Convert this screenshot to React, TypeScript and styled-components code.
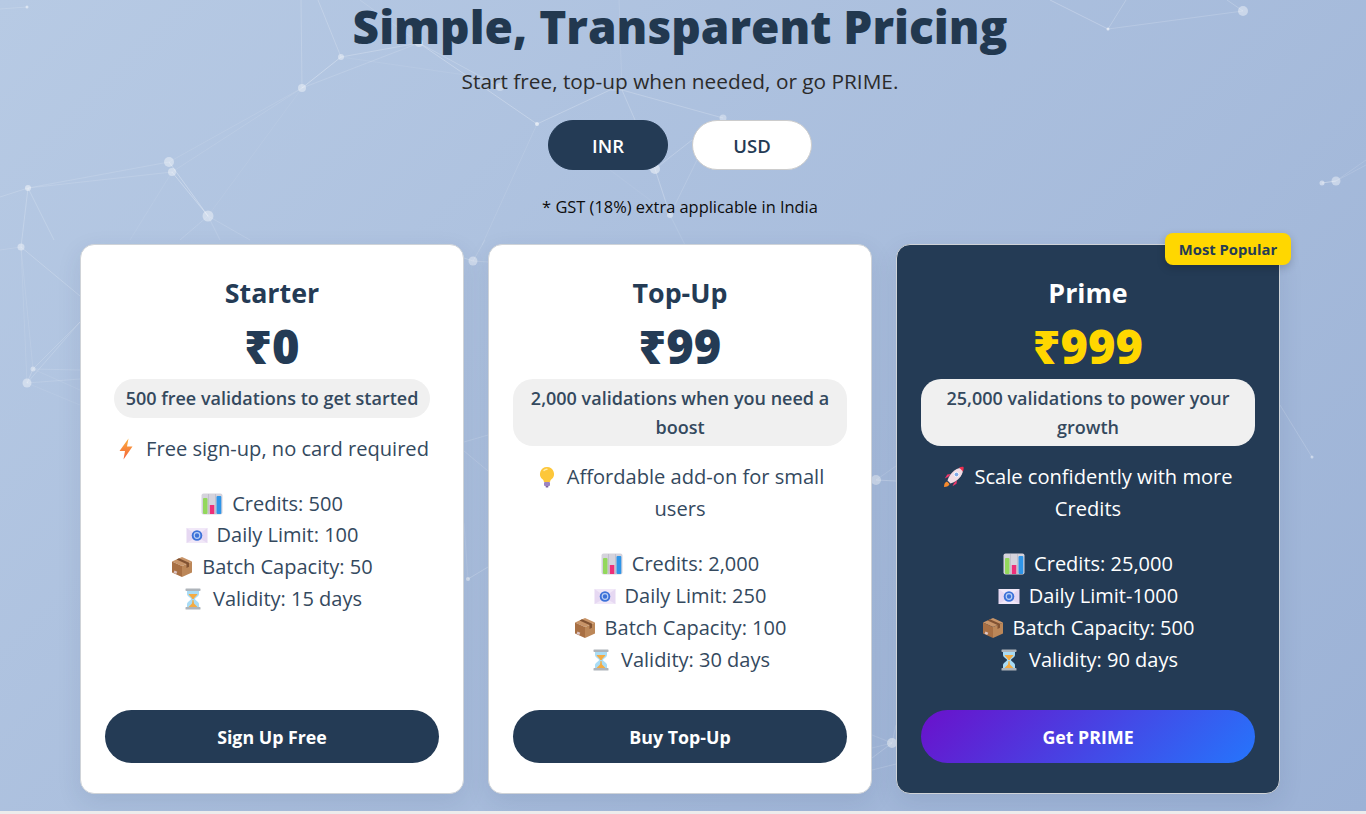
import React from "react";
import styled, { createGlobalStyle } from "styled-components";

const Global = createGlobalStyle`
  html, body { margin: 0; padding: 0; background: #ececec; }
  body { font-family: "Open Sans", "Noto Sans", sans-serif; overflow: hidden; }
  * { box-sizing: border-box; }
`;

const Page = styled.div`
  position: relative;
  height: 811px;
  overflow: hidden;
  background: linear-gradient(135deg, #b7cae4 0%, #9cb2d6 100%);
`;
const Network = styled.svg`
  position: absolute;
  inset: 0;
  width: 1366px;
  height: 811px;
`;
const Content = styled.main`
  position: relative;
  display: flex;
  flex-direction: column;
  align-items: center;
  padding-right: 6px;
`;
const Title = styled.h1`
  margin: 0;
  height: 54px;
  font-size: 46px;
  line-height: 52px;
  font-weight: 800;
  color: #22384f;
  white-space: nowrap;
`;
const Subtitle = styled.p`
  margin: 11px 0 0;
  font-size: 20.8px;
  line-height: 32px;
  color: #2b2b2b;
`;
const Toggle = styled.div`
  display: flex;
  gap: 24px;
  margin-top: 23px;
`;
const ToggleBtn = styled.button<{ $active?: boolean }>`
  width: 120px;
  height: 50px;
  border-radius: 25px;
  border: 1px solid ${(p) => (p.$active ? "#243b55" : "#cccccc")};
  background: ${(p) => (p.$active ? "#243b55" : "#ffffff")};
  color: ${(p) => (p.$active ? "#ffffff" : "#243b55")};
  font-family: inherit;
  font-size: 18.5px;
  font-weight: 600;
`;
const Note = styled.p`
  margin: 25px 0 0;
  font-size: 16.4px;
  line-height: 24px;
  color: #0c0c0c;
`;
const Plans = styled.section`
  display: grid;
  grid-template-columns: repeat(3, 384px);
  gap: 24px;
  margin-top: 25px;
`;
const Card = styled.article<{ $dark?: boolean }>`
  position: relative;
  display: flex;
  flex-direction: column;
  align-items: center;
  height: 550px;
  padding: 30px 24px;
  border: 1px solid #cfd3d8;
  border-radius: 14px;
  text-align: center;
  background: ${(p) => (p.$dark ? "#243b55" : "#ffffff")};
  color: ${(p) => (p.$dark ? "#ffffff" : "#34495e")};
  box-shadow: 0 8px 24px rgba(30, 50, 90, 0.1);
`;
const Badge = styled.span`
  position: absolute;
  top: -12px;
  right: -12px;
  width: 126px;
  height: 32px;
  border-radius: 8px;
  background: #ffd700;
  color: #243b55;
  font-size: 14.8px;
  font-weight: 700;
  line-height: 32px;
  box-shadow: 0 3px 8px rgba(0, 0, 0, 0.18);
`;
const PlanName = styled.h2<{ $dark?: boolean }>`
  margin: 0;
  font-size: 26.8px;
  line-height: 36px;
  font-weight: 700;
  color: ${(p) => (p.$dark ? "#ffffff" : "#243b55")};
`;
const Price = styled.div<{ $dark?: boolean }>`
  margin-top: 6px;
  height: 62px;
  font-family: "Noto Sans", "Open Sans", sans-serif;
  font-size: 47px;
  line-height: 58px;
  font-weight: 900;
  color: ${(p) => (p.$dark ? "#ffd700" : "#243b55")};
`;
const Pill = styled.div`
  padding: 5px 12px;
  border-radius: 20px;
  background: #f0f0f0;
  color: #34495e;
  font-size: 18px;
  line-height: 28.6px;
  font-weight: 600;
`;
const Tagline = styled.p`
  margin: 15px 0 0;
  font-size: 20.1px;
  line-height: 32px;
`;
const Features = styled.ul`
  list-style: none;
  margin: 23px 0 0;
  padding: 0;
  font-size: 20px;
  line-height: 31.8px;
`;
const CTA = styled.button<{ $prime?: boolean }>`
  width: 100%;
  height: 53px;
  margin-top: auto;
  flex: none;
  border: none;
  border-radius: 27px;
  background: ${(p) => (p.$prime ? "linear-gradient(135deg, #6a11cb, #2575fc)" : "#243b55")};
  color: #ffffff;
  font-family: inherit;
  font-size: 17.8px;
  font-weight: 700;
`;
const EmojiSvg = styled.svg`
  display: inline-block;
  width: 22px;
  height: 22px;
  margin-right: 9px;
  vertical-align: -4px;
`;

const Bolt = () => (
  <EmojiSvg viewBox="0 0 22 22">
    <defs>
      <linearGradient id="boltG" x1="0" y1="0" x2="0" y2="1">
        <stop offset="0" stopColor="#fbb03b" />
        <stop offset="1" stopColor="#f4603c" />
      </linearGradient>
    </defs>
    <path d="M13.500 .5 4.500 13h5.500L8.500 21.500 17.500 8.500h-5.500z" fill="url(#boltG)" />
  </EmojiSvg>
);
const Bulb = () => (
  <EmojiSvg viewBox="0 0 22 22">
    <path d="M11 1a7 7 0 0 0-4.200 12.600c.8.7 1 1.500 1.100 2.400h6.200c.1-.9.300-1.700 1.100-2.400A7 7 0 0 0 11 1z" fill="#fdc73a" />
    <path d="M8 4.500a4 4 0 0 1 3-1.300" stroke="#ffeaa8" strokeWidth="1.400" fill="none" strokeLinecap="round" />
    <rect x="8" y="16" width="6" height="4" rx="1" fill="#9c84c0" />
    <rect x="9.500" y="20" width="3" height="1.500" rx=".7" fill="#7c64a0" />
  </EmojiSvg>
);
const Rocket = () => (
  <EmojiSvg viewBox="0 0 22 22">
    <path d="M1 21c0-3 1-5 3-5.500l2.500 2.500C6 20 4 21 1 21z" fill="#f68a2d" />
    <path d="M5 11 1.800 12.500l2.500-4L8 8zM11 17l-1.500 3.200 4-2.500L14 14z" fill="#f0366a" />
    <path d="M4.500 14.500C7 7 12 2.500 18 2l2 2c-.5 6-5 11-12.500 13.500z" fill="#f2dbe3" />
    <path d="M16 1.500c2-.7 3.600-.8 4.500-.5.300.9.200 2.500-.5 4.500z" fill="#ee2f50" />
    <circle cx="13.500" cy="8.500" r="2.300" fill="#7da7e8" stroke="#fff" strokeWidth=".8" />
  </EmojiSvg>
);
const Chart = () => (
  <EmojiSvg viewBox="0 0 22 22">
    <rect x="0.500" y="0.500" width="21" height="21" rx="2" fill="#d5d3dc" />
    <path d="M7.500 1v20M14.500 1v20" stroke="#c2c0cc" strokeWidth="1" />
    <rect x="2" y="5" width="4.500" height="16" rx="1" fill="#93d85c" />
    <rect x="8.800" y="12" width="4.500" height="9" fill="#ee2f79" />
    <rect x="15.500" y="3" width="4.800" height="18" rx="1" fill="#2f95e8" />
  </EmojiSvg>
);
const Mail = () => (
  <EmojiSvg viewBox="0 0 22 22">
    <rect x="0.500" y="4" width="21" height="15" fill="#e6d8f2" />
    <path d="M.5 4 11 11.500 21.500 4zM.5 19 11 13l10.500 6z" fill="#f1e8f8" />
    <circle cx="11" cy="11.500" r="5.300" fill="#3d72d8" />
    <circle cx="11" cy="11.500" r="2.800" fill="none" stroke="#bcd2f5" strokeWidth="1.200" />
  </EmojiSvg>
);
const Box = () => (
  <EmojiSvg viewBox="0 0 22 22">
    <path d="M1 5.500 11 1l10 4.500L11 10z" fill="#c89468" />
    <path d="M1 5.500V16.500L11 21V10z" fill="#a86f43" />
    <path d="M21 5.500V16.500L11 21V10z" fill="#bc8758" />
    <path d="M5.500 3.500 15.500 8v4l2.500-1.200V6.800L8 2.300z" fill="#815232" />
    <rect x="3" y="15" width="3" height="2.500" fill="#ddc6c6" transform="rotate(24 4.500 16)" />
  </EmojiSvg>
);
const Glass = () => (
  <EmojiSvg viewBox="0 0 22 22">
    <path d="M5 2.500h12v3.500c0 2.500-4 3.500-4 5s4 2.500 4 5v3.500H5V16c0-2.500 4-3.500 4-5S5 8.500 5 6z" fill="#a9dcf5" />
    <path d="M6.500 6h9c-.5 2-3.500 3-3.800 5h-1.400C10 9 7 8 6.500 6z" fill="#f4ab42" />
    <path d="M10.500 12h1l.5 3.500 3.500 3.500h-9l3.500-3.500z" fill="#f4ab42" />
    <rect x="3.500" y="0.500" width="15" height="2.400" rx=".6" fill="#aeb4ba" />
    <rect x="3.500" y="19.100" width="15" height="2.400" rx=".6" fill="#aeb4ba" />
  </EmojiSvg>
);

const nodes: [number, number, number, number][] = [
  [27, 7, 1.5, 0.5], [302, 88, 4, 0.4], [341, 57, 3, 0.4], [419, 43, 4, 0.35], [169, 162, 5, 0.4],
  [172, 172, 4, 0.4], [208, 216, 5.5, 0.4], [28, 188, 3, 0.45], [21, 247, 3.5, 0.4], [33, 369, 2.5, 0.4],
  [27, 383, 4.5, 0.4], [500, 87, 4, 0.3], [537, 124, 2, 0.6], [723, 118, 3.5, 0.35], [655, 169, 5, 0.45],
  [670, 215, 3, 0.4], [1108, 29, 1.5, 0.6], [1243, 11, 5, 0.4], [1322, 183, 2.5, 0.45], [1336, 181, 4.5, 0.4],
  [1312, 457, 1.5, 0.45], [473, 261, 4.5, 0.4], [468, 579, 2, 0.45], [876, 480, 5, 0.4], [892, 743, 5, 0.45],
];
const edges: [number, number, number, number, number][] = [
  [0, 9, 27, 7, 0.15], [301, 0, 302, 88, 0.18], [318, 0, 341, 57, 0.2], [302, 88, 341, 57, 0.3], [302, 88, 419, 43, 0.14],
  [341, 57, 419, 43, 0.22], [341, 57, 500, 80, 0.07], [169, 162, 302, 88, 0.1], [172, 172, 302, 88, 0.1], [208, 216, 302, 88, 0.07],
  [208, 216, 169, 162, 0.28], [208, 216, 172, 172, 0.28], [28, 188, 169, 162, 0.13], [28, 188, 172, 172, 0.13], [0, 197, 28, 188, 0.16],
  [28, 188, 21, 247, 0.2], [28, 188, 54, 240, 0.18], [208, 216, 180, 240, 0.12], [208, 216, 250, 240, 0.12], [208, 216, 220, 240, 0.12],
  [172, 172, 130, 240, 0.07], [419, 43, 537, 124, 0.26], [419, 43, 500, 87, 0.18], [360, 0, 419, 43, 0.12], [537, 124, 610, 90, 0.22],
  [622, 90, 723, 118, 0.2], [622, 90, 635, 120, 0.2], [619, 0, 622, 90, 0.1], [610, 90, 622, 90, 0.2], [655, 169, 670, 215, 0.24], [697, 160, 670, 215, 0.13],
  [692, 140, 655, 169, 0.2], [537, 124, 482, 245, 0.1], [670, 215, 685, 245, 0.1], [610, 170, 670, 215, 0.06],
  [1050, 0, 1108, 29, 0.24], [1126, 0, 1108, 29, 0.2], [1108, 29, 1243, 11, 0.16], [1227, 0, 1243, 11, 0.2], [1322, 183, 1336, 181, 0.35],
  [1336, 181, 1366, 160, 0.13], [1336, 181, 1366, 165, 0.13], [1280, 405, 1312, 457, 0.16],
  [21, 247, 80, 296, 0.2], [0, 250, 21, 247, 0.12], [21, 247, 33, 369, 0.1], [21, 247, 27, 383, 0.1],
  [33, 369, 80, 322, 0.16], [33, 369, 80, 370, 0.12], [33, 369, 80, 390, 0.08], [27, 383, 80, 322, 0.16], [27, 383, 80, 379, 0.12],
  [27, 383, 80, 405, 0.07], [33, 369, 27, 383, 0.2], [464, 442, 488, 435, 0.14], [464, 451, 488, 471, 0.14], [468, 579, 488, 567, 0.2],
  [468, 579, 464, 523, 0.1], [464, 258, 473, 261, 0.2], [473, 261, 488, 262, 0.14], [473, 261, 485, 240, 0.14], [876, 480, 896, 481, 0.24], [876, 480, 896, 466, 0.13],
  [892, 743, 872, 758, 0.2], [892, 743, 872, 735, 0.13], [872, 770, 896, 764, 0.16], [892, 743, 896, 725, 0.13], [892, 743, 872, 748, 0.13],
];

type Plan = {
  name: string;
  price: string;
  pill: string;
  Icon: () => React.ReactElement;
  tagline: string;
  features: string[];
  cta: string;
  prime?: boolean;
};
const plans: Plan[] = [
  {
    name: "Starter", price: "₹0", pill: "500 free validations to get started", Icon: Bolt,
    tagline: "Free sign-up, no card required",
    features: ["Credits: 500", "Daily Limit: 100", "Batch Capacity: 50", "Validity: 15 days"], cta: "Sign Up Free",
  },
  {
    name: "Top-Up", price: "₹99", pill: "2,000 validations when you need a boost", Icon: Bulb,
    tagline: "Affordable add-on for small users",
    features: ["Credits: 2,000", "Daily Limit: 250", "Batch Capacity: 100", "Validity: 30 days"], cta: "Buy Top-Up",
  },
  {
    name: "Prime", price: "₹999", pill: "25,000 validations to power your growth", Icon: Rocket,
    tagline: "Scale confidently with more Credits",
    features: ["Credits: 25,000", "Daily Limit-1000", "Batch Capacity: 500", "Validity: 90 days"], cta: "Get PRIME", prime: true,
  },
];
const featureIcons = [Chart, Mail, Box, Glass];

export default function App() {
  return (
    <Page>
      <Global />
      <Network viewBox="0 0 1366 811">
        {edges.map(([x1, y1, x2, y2, o], i) => (
          <line key={i} x1={x1} y1={y1} x2={x2} y2={y2} stroke="#ffffff" strokeOpacity={o} strokeWidth="1" />
        ))}
        {nodes.map(([cx, cy, r, o], i) => (
          <circle key={i} cx={cx} cy={cy} r={r} fill="#ffffff" fillOpacity={o} />
        ))}
      </Network>
      <Content>
        <Title>Simple, Transparent Pricing</Title>
        <Subtitle>Start free, top-up when needed, or go PRIME.</Subtitle>
        <Toggle>
          <ToggleBtn $active>INR</ToggleBtn>
          <ToggleBtn>USD</ToggleBtn>
        </Toggle>
        <Note>* GST (18%) extra applicable in India</Note>
        <Plans>
          {plans.map((p) => (
            <Card key={p.name} $dark={p.prime}>
              {p.prime && <Badge>Most Popular</Badge>}
              <PlanName $dark={p.prime}>{p.name}</PlanName>
              <Price $dark={p.prime}>{p.price}</Price>
              <Pill>{p.pill}</Pill>
              <Tagline>
                <p.Icon />
                {p.tagline}
              </Tagline>
              <Features>
                {p.features.map((f, i) => {
                  const I = featureIcons[i];
                  return (
                    <li key={f}>
                      <I />
                      {f}
                    </li>
                  );
                })}
              </Features>
              <CTA $prime={p.prime}>{p.cta}</CTA>
            </Card>
          ))}
        </Plans>
      </Content>
    </Page>
  );
}
